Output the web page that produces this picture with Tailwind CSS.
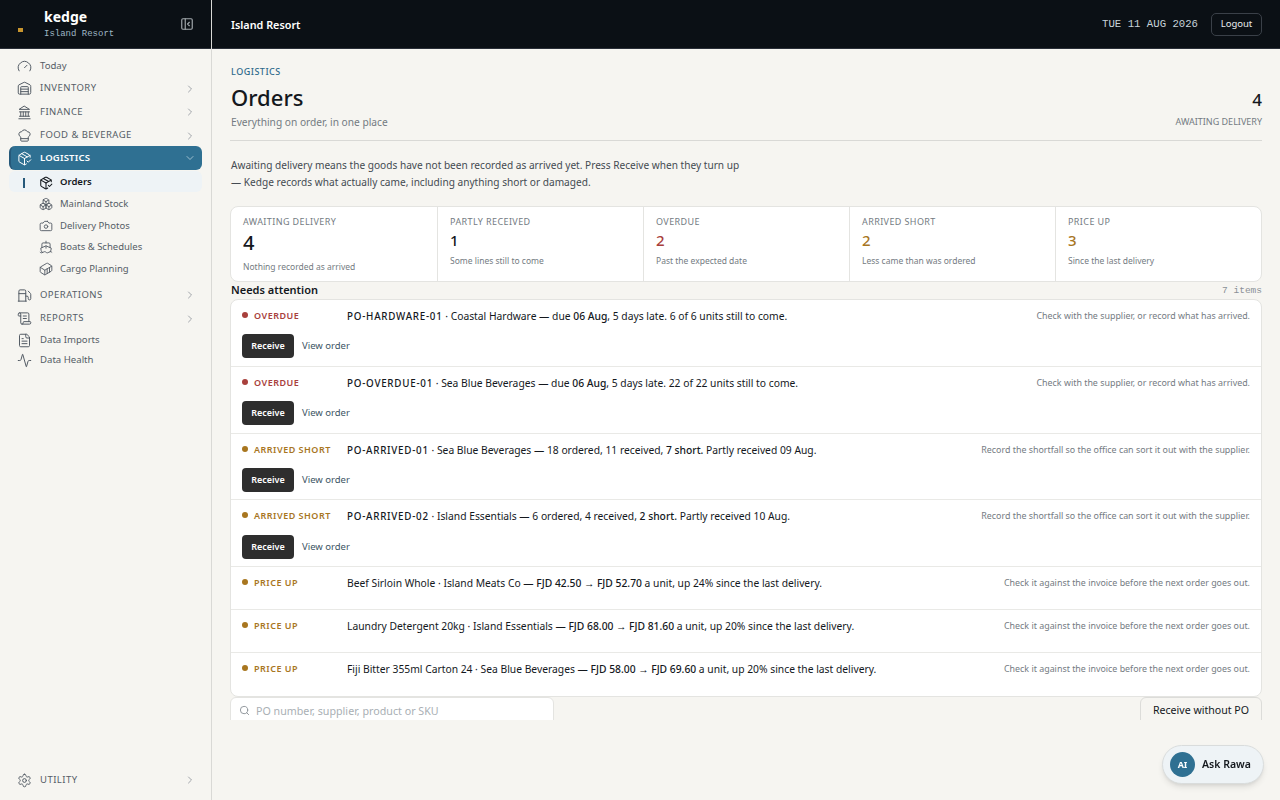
<!DOCTYPE html>
<html lang="en">
<head>
  <meta charset="UTF-8">
  <meta name="viewport" content="width=device-width, initial-scale=1.0">
  <title>Kedge - Orders</title>
  <script src="https://cdn.jsdelivr.net/npm/@tailwindcss/browser@4"></script>
</head>
<body class="bg-[#f6f5f1] font-['Noto_Sans',sans-serif] text-[#14181d] h-[800px] overflow-hidden">
  <div class="flex h-[800px]">

    <!-- Sidebar -->
    <aside class="w-[212px] shrink-0 flex flex-col border-r border-[#d9d9d6]">
      <div class="h-[49px] shrink-0 bg-[#0b1015] border-b border-[#2a2f38] flex items-center pl-[18px] pr-[17px]">
        <div class="w-[5px] h-[4px] mt-[12px] bg-[#c8952e]"></div>
        <div class="ml-[21px] flex-1">
          <div class="text-[14px] leading-[17px] font-bold text-white">kedge</div>
          <div class="text-[9px] leading-[12px] mt-[3px] font-['Liberation_Mono',monospace] text-[#9fb6c4]">Island Resort</div>
        </div>
        <svg class="w-[14px] h-[14px] text-[#a3a9ad]" viewBox="0 0 24 24" fill="none" stroke="currentColor" stroke-width="2" stroke-linecap="round" stroke-linejoin="round"><rect x="3" y="3" width="18" height="18" rx="2"/><path d="M9 3v18"/><path d="m16 15-3-3 3-3"/></svg>
      </div>

      <nav class="pt-[7px] pl-[9px] pr-[9px] text-[#555d66]">
        <!-- Today -->
        <div class="h-[20px] pt-[1px] flex items-center pl-[8px] gap-[8px] text-[9.6px]">
          <svg class="w-[15px] h-[15px] shrink-0" viewBox="0 0 24 24" fill="none" stroke="currentColor" stroke-width="1.6" stroke-linecap="round" stroke-linejoin="round"><path d="m12 14 4-4"/><path d="M3.34 19a10 10 0 1 1 17.32 0"/></svg>
          <span>Today</span>
        </div>
        <div class="h-[23px] pt-[2px] flex items-center pl-[8px] pr-[6px] gap-[8px] text-[9.5px] tracking-[0.45px]">
          <svg class="w-[15px] h-[15px] shrink-0" viewBox="0 0 24 24" fill="none" stroke="currentColor" stroke-width="1.6" stroke-linecap="round" stroke-linejoin="round"><path d="M18 21V10a1 1 0 0 0-1-1H7a1 1 0 0 0-1 1v11"/><path d="M22 19a2 2 0 0 1-2 2H4a2 2 0 0 1-2-2V8a2 2 0 0 1 1.132-1.803l7.95-3.974a2 2 0 0 1 1.837 0l7.948 3.974A2 2 0 0 1 22 8z"/><path d="M6 13h12"/><path d="M6 17h12"/></svg>
          <span class="flex-1">INVENTORY</span>
          <svg class="w-[12px] h-[12px] text-[#8b9198]" viewBox="0 0 24 24" fill="none" stroke="currentColor" stroke-width="1.6" stroke-linecap="round" stroke-linejoin="round"><path d="m9 18 6-6-6-6"/></svg>
        </div>
        <div class="h-[24px] pt-[2px] flex items-center pl-[8px] pr-[6px] gap-[8px] text-[9.5px] tracking-[0.45px]">
          <svg class="w-[15px] h-[15px] shrink-0" viewBox="0 0 24 24" fill="none" stroke="currentColor" stroke-width="1.6" stroke-linecap="round" stroke-linejoin="round"><path d="M3 22h18"/><path d="M6 18v-7"/><path d="M10 18v-7"/><path d="M14 18v-7"/><path d="M18 18v-7"/><path d="M12 2l8 5H4z"/><path d="M4 18h16"/><path d="M4 11h16"/></svg>
          <span class="flex-1">FINANCE</span>
          <svg class="w-[12px] h-[12px] text-[#8b9198]" viewBox="0 0 24 24" fill="none" stroke="currentColor" stroke-width="1.6" stroke-linecap="round" stroke-linejoin="round"><path d="m9 18 6-6-6-6"/></svg>
        </div>
        <div class="h-[23px] pt-[2px] flex items-center pl-[8px] pr-[6px] gap-[8px] text-[9.5px] tracking-[0.45px]">
          <svg class="w-[15px] h-[15px] shrink-0" viewBox="0 0 24 24" fill="none" stroke="currentColor" stroke-width="1.6" stroke-linecap="round" stroke-linejoin="round"><path d="M17 21a1 1 0 0 0 1-1v-5.35c0-.457.316-.844.727-1.041a4 4 0 0 0-2.134-7.589 5 5 0 0 0-9.186 0 4 4 0 0 0-2.134 7.588c.411.198.727.585.727 1.041V20a1 1 0 0 0 1 1Z"/><path d="M6 17h12"/></svg>
          <span class="flex-1">FOOD &amp; BEVERAGE</span>
          <svg class="w-[12px] h-[12px] text-[#8b9198]" viewBox="0 0 24 24" fill="none" stroke="currentColor" stroke-width="1.6" stroke-linecap="round" stroke-linejoin="round"><path d="m9 18 6-6-6-6"/></svg>
        </div>

        <!-- Logistics, open -->
        <div class="h-[24px] flex items-center pl-[8px] pr-[6px] gap-[8px] text-[9.5px] tracking-[0.2px] font-semibold text-white bg-[#2f7092] rounded-[6px] border-l-[2px] border-[#26597a]">
          <svg class="w-[15px] h-[15px] shrink-0 -ml-[2px]" viewBox="0 0 24 24" fill="none" stroke="currentColor" stroke-width="1.6" stroke-linecap="round" stroke-linejoin="round"><path d="m16 16 2 2 4-4"/><path d="M21 10V8a2 2 0 0 0-1-1.73l-7-4a2 2 0 0 0-2 0l-7 4A2 2 0 0 0 3 8v8a2 2 0 0 0 1 1.73l7 4a2 2 0 0 0 2 0l2-1.14"/><path d="m7.5 4.27 9 5.15"/><path d="M3.29 7 12 12l8.71-5"/><path d="M12 22V12"/></svg>
          <span class="flex-1">LOGISTICS</span>
          <svg class="w-[12px] h-[12px] text-[#b9d0dc]" viewBox="0 0 24 24" fill="none" stroke="currentColor" stroke-width="1.6" stroke-linecap="round" stroke-linejoin="round"><path d="m6 9 6 6 6-6"/></svg>
        </div>
        <div class="mt-[1px] h-[21px] pt-[2px] flex items-center rounded-[6px] bg-[#eef3f6] text-[#14181d] font-semibold text-[9.5px]">
          <div class="w-[2px] h-[10px] ml-[14px] bg-[#26597a]"></div>
          <svg class="w-[14px] h-[14px] ml-[14px] shrink-0" viewBox="0 0 24 24" fill="none" stroke="currentColor" stroke-width="1.8" stroke-linecap="round" stroke-linejoin="round"><path d="m16 16 2 2 4-4"/><path d="M21 10V8a2 2 0 0 0-1-1.73l-7-4a2 2 0 0 0-2 0l-7 4A2 2 0 0 0 3 8v8a2 2 0 0 0 1 1.73l7 4a2 2 0 0 0 2 0l2-1.14"/><path d="m7.5 4.27 9 5.15"/><path d="M3.29 7 12 12l8.71-5"/><path d="M12 22V12"/></svg>
          <span class="ml-[7px]">Orders</span>
        </div>
        <div class="mt-[0.5px] h-[21.5px] pt-[2px] flex items-center pl-[30px] gap-[7px] text-[9.5px]">
          <svg class="w-[14px] h-[14px] shrink-0" viewBox="0 0 24 24" fill="none" stroke="currentColor" stroke-width="1.6" stroke-linecap="round" stroke-linejoin="round"><path d="M2.97 12.92A2 2 0 0 0 2 14.63v3.24a2 2 0 0 0 .97 1.71l3 1.8a2 2 0 0 0 2.06 0L12 19v-5.5l-5-3-4.03 2.42Z"/><path d="m7 16.5-4.74-2.85"/><path d="m7 16.5 5-3"/><path d="M7 16.5v5.17"/><path d="M12 13.5V19l3.97 2.38a2 2 0 0 0 2.06 0l3-1.8a2 2 0 0 0 .97-1.71v-3.24a2 2 0 0 0-.97-1.71L17 10.5l-5 3Z"/><path d="m17 16.5-5-3"/><path d="m17 16.5 4.74-2.85"/><path d="M17 16.5v5.17"/><path d="M7.97 4.42A2 2 0 0 0 7 6.13v4.37l5 3 5-3V6.13a2 2 0 0 0-.97-1.71l-3-1.8a2 2 0 0 0-2.06 0l-3 1.8Z"/><path d="M12 8 7.26 5.15"/><path d="m12 8 4.74-2.85"/><path d="M12 13.5V8"/></svg>
          <span>Mainland Stock</span>
        </div>
        <div class="h-[21.5px] pt-[2px] flex items-center pl-[30px] gap-[7px] text-[9.5px]">
          <svg class="w-[14px] h-[14px] shrink-0" viewBox="0 0 24 24" fill="none" stroke="currentColor" stroke-width="1.6" stroke-linecap="round" stroke-linejoin="round"><path d="M14.5 4h-5L7 7H4a2 2 0 0 0-2 2v9a2 2 0 0 0 2 2h16a2 2 0 0 0 2-2V9a2 2 0 0 0-2-2h-3l-2.5-3z"/><circle cx="12" cy="13" r="3"/></svg>
          <span>Delivery Photos</span>
        </div>
        <div class="h-[21.5px] pt-[2px] flex items-center pl-[30px] gap-[7px] text-[9.5px]">
          <svg class="w-[14px] h-[14px] shrink-0" viewBox="0 0 24 24" fill="none" stroke="currentColor" stroke-width="1.6" stroke-linecap="round" stroke-linejoin="round"><path d="M12 10.189V14"/><path d="M12 2v3"/><path d="M19 13V7a2 2 0 0 0-2-2H7a2 2 0 0 0-2 2v6"/><path d="M19.38 20A11.6 11.6 0 0 0 21 14l-8.188-3.639a2 2 0 0 0-1.624 0L3 14a11.6 11.6 0 0 0 2.81 7.76"/><path d="M2 21c.6.5 1.2 1 2.5 1 2.5 0 2.5-2 5-2 1.3 0 1.9.5 2.5 1s1.2 1 2.5 1c2.5 0 2.5-2 5-2 1.3 0 1.9.5 2.5 1"/></svg>
          <span>Boats &amp; Schedules</span>
        </div>
        <div class="h-[21.5px] pt-[2px] flex items-center pl-[30px] gap-[7px] text-[9.5px]">
          <svg class="w-[14px] h-[14px] shrink-0" viewBox="0 0 24 24" fill="none" stroke="currentColor" stroke-width="1.6" stroke-linecap="round" stroke-linejoin="round"><path d="M22 7.7c0-.6-.4-1.2-.8-1.5l-6.3-3.9a1.72 1.72 0 0 0-1.7 0l-10.3 6c-.5.2-.9.8-.9 1.4v6.6c0 .5.4 1.2.8 1.5l6.3 3.9a1.72 1.72 0 0 0 1.7 0l10.3-6c.5-.3.9-1 .9-1.5Z"/><path d="M10 21.9V14L2.1 9.1"/><path d="m10 14 11.9-6.9"/><path d="M14 19.8v-8.1"/><path d="M18 17.5V9.4"/></svg>
          <span>Cargo Planning</span>
        </div>

        <div class="mt-[4px] h-[23px] pt-[2px] flex items-center pl-[8px] pr-[6px] gap-[8px] text-[9.5px] tracking-[0.45px]">
          <svg class="w-[15px] h-[15px] shrink-0" viewBox="0 0 24 24" fill="none" stroke="currentColor" stroke-width="1.6" stroke-linecap="round" stroke-linejoin="round"><path d="M14 13h2a2 2 0 0 1 2 2v2a2 2 0 0 0 4 0v-6.998a2 2 0 0 0-.59-1.42L18 5"/><path d="M14 21V5a2 2 0 0 0-2-2H5a2 2 0 0 0-2 2v16"/><path d="M2 21h13"/><path d="M3 9h11"/></svg>
          <span class="flex-1">OPERATIONS</span>
          <svg class="w-[12px] h-[12px] text-[#8b9198]" viewBox="0 0 24 24" fill="none" stroke="currentColor" stroke-width="1.6" stroke-linecap="round" stroke-linejoin="round"><path d="m9 18 6-6-6-6"/></svg>
        </div>
        <div class="h-[24px] pt-[2px] flex items-center pl-[8px] pr-[6px] gap-[8px] text-[9.5px] tracking-[0.45px]">
          <svg class="w-[15px] h-[15px] shrink-0" viewBox="0 0 24 24" fill="none" stroke="currentColor" stroke-width="1.6" stroke-linecap="round" stroke-linejoin="round"><path d="M15 12h-5"/><path d="M15 8h-5"/><path d="M19 17V5a2 2 0 0 0-2-2H4"/><path d="M8 21h12a2 2 0 0 0 2-2v-1a1 1 0 0 0-1-1H11a1 1 0 0 0-1 1v1a2 2 0 1 1-4 0V5a2 2 0 1 0-4 0v2a1 1 0 0 0 1 1h3"/></svg>
          <span class="flex-1">REPORTS</span>
          <svg class="w-[12px] h-[12px] text-[#8b9198]" viewBox="0 0 24 24" fill="none" stroke="currentColor" stroke-width="1.6" stroke-linecap="round" stroke-linejoin="round"><path d="m9 18 6-6-6-6"/></svg>
        </div>
        <div class="h-[20px] pt-[2px] flex items-center pl-[8px] gap-[8px] text-[9.6px]">
          <svg class="w-[15px] h-[15px] shrink-0" viewBox="0 0 24 24" fill="none" stroke="currentColor" stroke-width="1.6" stroke-linecap="round" stroke-linejoin="round"><path d="M15 2H6a2 2 0 0 0-2 2v16a2 2 0 0 0 2 2h12a2 2 0 0 0 2-2V7Z"/><path d="M14 2v4a2 2 0 0 0 2 2h4"/><path d="M10 9H8"/><path d="M16 13H8"/><path d="M16 17H8"/></svg>
          <span>Data Imports</span>
        </div>
        <div class="h-[20px] pt-[2px] flex items-center pl-[8px] gap-[8px] text-[9.6px]">
          <svg class="w-[15px] h-[15px] shrink-0" viewBox="0 0 24 24" fill="none" stroke="currentColor" stroke-width="1.6" stroke-linecap="round" stroke-linejoin="round"><path d="M22 12h-2.48a2 2 0 0 0-1.93 1.46l-2.35 8.36a.25.25 0 0 1-.48 0L9.24 2.18a.25.25 0 0 0-.48 0l-2.35 8.36A2 2 0 0 1 4.49 12H2"/></svg>
          <span>Data Health</span>
        </div>
      </nav>

      <div class="mt-auto mb-[9px] mx-[9px] h-[24px] pt-[2px] flex items-center pl-[8px] pr-[6px] gap-[8px] text-[9.5px] tracking-[0.45px] text-[#555d66]">
        <svg class="w-[15px] h-[15px] shrink-0" viewBox="0 0 24 24" fill="none" stroke="currentColor" stroke-width="1.6" stroke-linecap="round" stroke-linejoin="round"><path d="M12.22 2h-.44a2 2 0 0 0-2 2v.18a2 2 0 0 1-1 1.73l-.43.25a2 2 0 0 1-2 0l-.15-.08a2 2 0 0 0-2.73.73l-.22.38a2 2 0 0 0 .73 2.73l.15.1a2 2 0 0 1 1 1.72v.51a2 2 0 0 1-1 1.74l-.15.09a2 2 0 0 0-.73 2.73l.22.38a2 2 0 0 0 2.73.73l.15-.08a2 2 0 0 1 2 0l.43.25a2 2 0 0 1 1 1.73V20a2 2 0 0 0 2 2h.44a2 2 0 0 0 2-2v-.18a2 2 0 0 1 1-1.73l.43-.25a2 2 0 0 1 2 0l.15.08a2 2 0 0 0 2.73-.73l.22-.39a2 2 0 0 0-.73-2.73l-.15-.08a2 2 0 0 1-1-1.74v-.5a2 2 0 0 1 1-1.74l.15-.09a2 2 0 0 0 .73-2.73l-.22-.38a2 2 0 0 0-2.73-.73l-.15.08a2 2 0 0 1-2 0l-.43-.25a2 2 0 0 1-1-1.73V4a2 2 0 0 0-2-2z"/><circle cx="12" cy="12" r="3"/></svg>
        <span class="flex-1">UTILITY</span>
        <svg class="w-[12px] h-[12px] text-[#8b9198]" viewBox="0 0 24 24" fill="none" stroke="currentColor" stroke-width="1.6" stroke-linecap="round" stroke-linejoin="round"><path d="m9 18 6-6-6-6"/></svg>
      </div>
    </aside>

    <div class="flex-1 min-w-0 flex flex-col">
      <!-- Top bar -->
      <header class="h-[49px] shrink-0 bg-[#0b1015] border-b border-[#2a2f38] flex items-center pl-[19px] pr-[18px] text-white">
        <div class="text-[10.8px] font-semibold flex-1 mt-[2px]">Island Resort</div>
        <div class="font-['Liberation_Mono',monospace] text-[10.67px] text-[#c7d3da] -mt-[1px]">TUE 11 AUG 2026</div>
        <div class="ml-[13px] w-[51px] h-[23px] border border-[#3a4048] rounded-[5px] flex items-center justify-center text-[9.5px] text-[#e8ebed]">Logout</div>
      </header>

      <!-- Page -->
      <main class="h-[671px] overflow-hidden pl-[18px] pr-[18px]">
        <div class="pt-[17px] pb-[11px] border-b border-[#d9d9d6] flex justify-between items-end">
          <div class="ml-[1px]">
            <div class="text-[9px] leading-[12px] tracking-[0.5px] text-[#2f6a8c] font-medium">LOGISTICS</div>
            <h1 class="text-[22px] leading-[30px] mt-[4px] font-medium">Orders</h1>
            <div class="text-[10.2px] leading-[14px] mt-[3px] text-[#747b82]">Everything on order, in one place</div>
          </div>
          <div class="text-right">
            <div class="text-[17px] leading-[22px] font-medium">4</div>
            <div class="text-[9px] leading-[12px] mt-[5px] mb-[1px] text-[#747b82]">AWAITING DELIVERY</div>
          </div>
        </div>

        <p class="mt-[16px] ml-[1px] text-[10.12px] leading-[17px] text-[#444b52]">Awaiting delivery means the goods have not been recorded as arrived yet. Press Receive when they turn up<br>— Kedge records what actually came, including anything short or damaged.</p>

        <!-- Stats -->
        <div class="mt-[15px] h-[76px] grid grid-cols-5 bg-white border border-[#e4e4e1] rounded-[8px]">
          <div class="pl-[12px] pt-[9px]">
            <div class="text-[9px] leading-[12px] tracking-[0.4px] text-[#747b82]">AWAITING DELIVERY</div>
            <div class="text-[20px] leading-[26px] mt-[2px] font-medium">4</div>
            <div class="text-[8.5px] leading-[12px] mt-[5px] text-[#747b82]">Nothing recorded as arrived</div>
          </div>
          <div class="pl-[12px] pt-[9px] border-l border-[#e4e4e1]">
            <div class="text-[9px] leading-[12px] tracking-[0.4px] text-[#747b82]">PARTLY RECEIVED</div>
            <div class="text-[15px] leading-[20px] mt-[2px] font-medium">1</div>
            <div class="text-[8.5px] leading-[12px] mt-[5px] text-[#747b82]">Some lines still to come</div>
          </div>
          <div class="pl-[12px] pt-[9px] border-l border-[#e4e4e1]">
            <div class="text-[9px] leading-[12px] tracking-[0.4px] text-[#747b82]">OVERDUE</div>
            <div class="text-[15px] leading-[20px] mt-[2px] font-medium text-[#a8403c]">2</div>
            <div class="text-[8.5px] leading-[12px] mt-[5px] text-[#747b82]">Past the expected date</div>
          </div>
          <div class="pl-[12px] pt-[9px] border-l border-[#e4e4e1]">
            <div class="text-[9px] leading-[12px] tracking-[0.4px] text-[#747b82]">ARRIVED SHORT</div>
            <div class="text-[15px] leading-[20px] mt-[2px] font-medium text-[#a8761f]">2</div>
            <div class="text-[8.5px] leading-[12px] mt-[5px] text-[#747b82]">Less came than was ordered</div>
          </div>
          <div class="pl-[12px] pt-[9px] border-l border-[#e4e4e1]">
            <div class="text-[9px] leading-[12px] tracking-[0.4px] text-[#747b82]">PRICE UP</div>
            <div class="text-[15px] leading-[20px] mt-[2px] font-medium text-[#a8761f]">3</div>
            <div class="text-[8.5px] leading-[12px] mt-[5px] text-[#747b82]">Since the last delivery</div>
          </div>
        </div>

        <!-- Needs attention -->
        <div class="h-[17px] flex items-center justify-between">
          <div class="ml-[1px] text-[11px] font-semibold">Needs attention</div>
          <div class="font-['Liberation_Mono',monospace] text-[9.5px] text-[#8a9096] mt-[2px]">7 items</div>
        </div>

        <div class="bg-white border border-[#e4e4e1] rounded-[8px]">
          <!-- row -->
          <div class="h-[67px] pl-[11px] pr-[11px] pt-[9px] border-b border-[#e9e9e6]">
            <div class="flex items-center h-[14px]">
              <span class="w-[6px] h-[6px] rounded-full bg-[#a8403c] -mt-[2px]"></span>
              <span class="ml-[6px] w-[93px] shrink-0 text-[9px] font-semibold tracking-[0.5px] text-[#a8403c] -mt-[1px]">OVERDUE</span>
              <span class="text-[10.3px] flex-1 mt-[1px]"><span class="font-medium text-[9.8px] tracking-[0.75px]">PO-HARDWARE-01</span> · Coastal Hardware — due <b class="font-medium">06 Aug</b>, 5 days late. 6 of 6 units still to come.</span>
              <span class="text-[8.9px] text-[#747b82]">Check with the supplier, or record what has arrived.</span>
            </div>
            <div class="flex items-center mt-[11px]">
              <span class="w-[52px] h-[24px] rounded-[4px] bg-[#2e2e2e] text-white text-[9px] font-semibold flex items-center justify-center">Receive</span>
              <span class="ml-[8px] text-[9.5px] text-[#3c5464]">View order</span>
            </div>
          </div>
          <div class="h-[67px] pl-[11px] pr-[11px] pt-[9px] border-b border-[#e9e9e6]">
            <div class="flex items-center h-[14px]">
              <span class="w-[6px] h-[6px] rounded-full bg-[#a8403c] -mt-[2px]"></span>
              <span class="ml-[6px] w-[93px] shrink-0 text-[9px] font-semibold tracking-[0.5px] text-[#a8403c] -mt-[1px]">OVERDUE</span>
              <span class="text-[10.3px] flex-1 mt-[1px]"><span class="font-medium text-[9.8px] tracking-[0.75px]">PO-OVERDUE-01</span> · Sea Blue Beverages — due <b class="font-medium">06 Aug</b>, 5 days late. 22 of 22 units still to come.</span>
              <span class="text-[8.9px] text-[#747b82]">Check with the supplier, or record what has arrived.</span>
            </div>
            <div class="flex items-center mt-[11px]">
              <span class="w-[52px] h-[24px] rounded-[4px] bg-[#2e2e2e] text-white text-[9px] font-semibold flex items-center justify-center">Receive</span>
              <span class="ml-[8px] text-[9.5px] text-[#3c5464]">View order</span>
            </div>
          </div>
          <div class="h-[66px] pl-[11px] pr-[11px] pt-[9px] border-b border-[#e9e9e6]">
            <div class="flex items-center h-[14px]">
              <span class="w-[6px] h-[6px] rounded-full bg-[#a8761f] -mt-[2px]"></span>
              <span class="ml-[6px] w-[93px] shrink-0 text-[9px] font-semibold tracking-[0.5px] text-[#a8761f] -mt-[1px]">ARRIVED SHORT</span>
              <span class="text-[10.3px] flex-1 mt-[1px]"><span class="font-medium text-[9.8px] tracking-[0.75px]">PO-ARRIVED-01</span> · Sea Blue Beverages — 18 ordered, 11 received, <b class="font-medium">7 short.</b> Partly received 09 Aug.</span>
              <span class="text-[8.9px] text-[#747b82]">Record the shortfall so the office can sort it out with the supplier.</span>
            </div>
            <div class="flex items-center mt-[11px]">
              <span class="w-[52px] h-[24px] rounded-[4px] bg-[#2e2e2e] text-white text-[9px] font-semibold flex items-center justify-center">Receive</span>
              <span class="ml-[8px] text-[9.5px] text-[#3c5464]">View order</span>
            </div>
          </div>
          <div class="h-[67px] pl-[11px] pr-[11px] pt-[9px] border-b border-[#e9e9e6]">
            <div class="flex items-center h-[14px]">
              <span class="w-[6px] h-[6px] rounded-full bg-[#a8761f] -mt-[2px]"></span>
              <span class="ml-[6px] w-[93px] shrink-0 text-[9px] font-semibold tracking-[0.5px] text-[#a8761f] -mt-[1px]">ARRIVED SHORT</span>
              <span class="text-[10.3px] flex-1 mt-[1px]"><span class="font-medium text-[9.8px] tracking-[0.75px]">PO-ARRIVED-02</span> · Island Essentials — 6 ordered, 4 received, <b class="font-medium">2 short.</b> Partly received 10 Aug.</span>
              <span class="text-[8.9px] text-[#747b82]">Record the shortfall so the office can sort it out with the supplier.</span>
            </div>
            <div class="flex items-center mt-[12px]">
              <span class="w-[52px] h-[24px] rounded-[4px] bg-[#2e2e2e] text-white text-[9px] font-semibold flex items-center justify-center">Receive</span>
              <span class="ml-[8px] text-[9.5px] text-[#3c5464]">View order</span>
            </div>
          </div>
          <div class="h-[43px] pl-[11px] pr-[11px] pt-[9px] border-b border-[#e9e9e6]">
            <div class="flex items-center h-[14px]">
              <span class="w-[6px] h-[6px] rounded-full bg-[#a8761f] -mt-[2px]"></span>
              <span class="ml-[6px] w-[93px] shrink-0 text-[9px] font-semibold tracking-[0.5px] text-[#a8761f] -mt-[1px]">PRICE UP</span>
              <span class="text-[10.3px] flex-1 mt-[1px]">Beef Sirloin Whole · Island Meats Co — <b class="font-medium">FJD 42.50 → FJD 52.70</b> a unit, up 24% since the last delivery.</span>
              <span class="text-[8.9px] text-[#747b82]">Check it against the invoice before the next order goes out.</span>
            </div>
          </div>
          <div class="h-[43px] pl-[11px] pr-[11px] pt-[9px] border-b border-[#e9e9e6]">
            <div class="flex items-center h-[14px]">
              <span class="w-[6px] h-[6px] rounded-full bg-[#a8761f] -mt-[2px]"></span>
              <span class="ml-[6px] w-[93px] shrink-0 text-[9px] font-semibold tracking-[0.5px] text-[#a8761f] -mt-[1px]">PRICE UP</span>
              <span class="text-[10.3px] flex-1 mt-[1px]">Laundry Detergent 20kg · Island Essentials — <b class="font-medium">FJD 68.00 → FJD 81.60</b> a unit, up 20% since the last delivery.</span>
              <span class="text-[8.9px] text-[#747b82]">Check it against the invoice before the next order goes out.</span>
            </div>
          </div>
          <div class="h-[43px] pl-[11px] pr-[11px] pt-[9px]">
            <div class="flex items-center h-[14px]">
              <span class="w-[6px] h-[6px] rounded-full bg-[#a8761f] -mt-[2px]"></span>
              <span class="ml-[6px] w-[93px] shrink-0 text-[9px] font-semibold tracking-[0.5px] text-[#a8761f] -mt-[1px]">PRICE UP</span>
              <span class="text-[10.3px] flex-1 mt-[1px]">Fiji Bitter 355ml Carton 24 · Sea Blue Beverages — <b class="font-medium">FJD 58.00 → FJD 69.60</b> a unit, up 20% since the last delivery.</span>
              <span class="text-[8.9px] text-[#747b82]">Check it against the invoice before the next order goes out.</span>
            </div>
          </div>
        </div>

        <!-- Search and receive, cut off by the page edge -->
        <div class="flex justify-between">
          <div class="w-[324px] h-[32px] bg-white border border-[#e4e4e1] rounded-[6px] flex items-center pl-[8px] -mb-[8px]">
            <svg class="w-[11px] h-[11px] text-[#8a9096] -mt-[6px]" viewBox="0 0 24 24" fill="none" stroke="currentColor" stroke-width="2" stroke-linecap="round" stroke-linejoin="round"><circle cx="11" cy="11" r="8"/><path d="m21 21-4.3-4.3"/></svg>
            <span class="ml-[6px] text-[10.7px] text-[#a9afb4] -mt-[4px]">PO number, supplier, product or SKU</span>
          </div>
          <div class="w-[122px] h-[32px] bg-[#f6f5f1] border border-[#dcdcd9] rounded-[6px] flex items-center justify-center text-[10.6px]"><span class="-mt-[5px]">Receive without PO</span></div>
        </div>
      </main>
    </div>
  </div>

  <!-- Floating assistant -->
  <div class="fixed left-[1162px] top-[745px] w-[102px] h-[39px] rounded-full bg-[#eef3f6] border border-[#d9dcdc] shadow-md flex items-center pl-[7px]">
    <div class="w-[25px] h-[25px] rounded-full bg-[#2f7092] text-white text-[9px] font-bold flex items-center justify-center">AI</div>
    <span class="ml-[7px] text-[10.5px] font-semibold">Ask Rawa</span>
  </div>
</body>
</html>
